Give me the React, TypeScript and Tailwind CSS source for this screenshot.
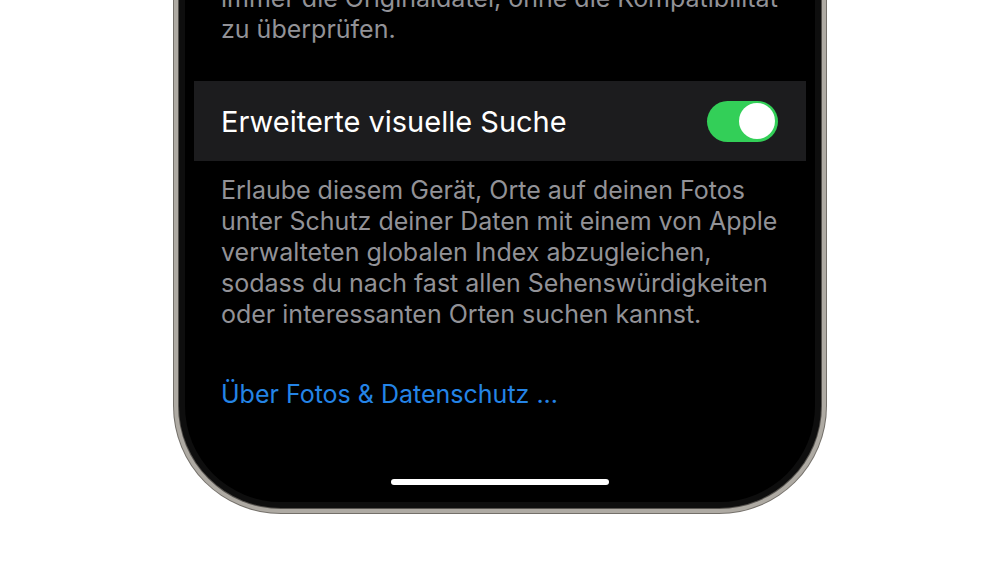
export default function App() {
  const font = { fontFamily: 'Inter, "Noto Sans", sans-serif' };
  return (
    <div className="h-[573px] w-full overflow-hidden bg-white" style={font}>
      <div className="mx-auto h-[514px] w-[654px] rounded-b-[108px] bg-[#74706a] px-[1px] pb-[1px]">
        <div className="h-full rounded-b-[107px] bg-[#aeaaa3] px-[4px] pb-[4px]">
          <div className="h-full rounded-b-[103px] bg-[#55524e] px-[1px] pb-[1px]">
            <div className="h-full rounded-b-[102px] bg-[#0e0e0e] px-[6px] pb-[6px]">
              <div className="flex h-full flex-col rounded-b-[96px] bg-black">
                <p className="-mt-[17px] pl-[36px] pr-[20px] text-[25px] leading-[31px] text-[#929297]">
                  immer die Originaldatei, ohne die Kompatibilität
                  <br />
                  zu überprüfen.
                </p>

                <div className="mx-[9px] mt-[36px] flex h-[80px] items-center justify-between bg-[#1c1c1e] pl-[27px] pr-[28px]">
                  <span className="pt-[2px] text-[29px] text-white">Erweiterte visuelle Suche</span>
                  <div className="flex h-[41px] w-[71px] items-center justify-end rounded-full bg-[#33cf58] px-[3px]">
                    <div className="h-[36px] w-[36px] rounded-full bg-white" />
                  </div>
                </div>

                <p className="mt-[14px] pl-[36px] pr-[10px] text-[25px] leading-[31px] text-[#929297]">
                  Erlaube diesem Gerät, Orte auf deinen Fotos
                  <br />
                  unter Schutz deiner Daten mit einem von Apple
                  <br />
                  verwalteten globalen Index abzugleichen,
                  <br />
                  sodass du nach fast allen Sehenswürdigkeiten
                  <br />
                  oder interessanten Orten suchen kannst.
                </p>

                <a className="mt-[49px] px-[36px] text-[25px] leading-[31px] text-[#2484e6]">
                  Über Fotos &amp; Datenschutz ...
                </a>

                <div className="mx-auto mb-[17px] mt-auto h-[6px] w-[218px] rounded-full bg-white" />
              </div>
            </div>
          </div>
        </div>
      </div>
    </div>
  );
}
